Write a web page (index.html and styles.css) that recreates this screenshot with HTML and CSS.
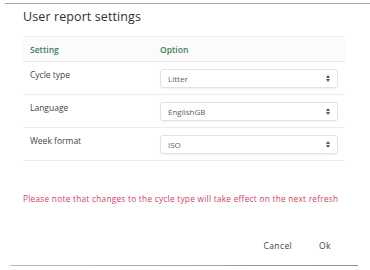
FILE: index.html
```html
<!DOCTYPE html>
<html lang="en">
<head>
    <meta charset="UTF-8">
    <title>User report settings</title>
    <link rel="stylesheet" href="styles.css">
</head>
<body>
    <div class="dialog">
        <h2 class="dialog-title">User report settings</h2>

        <table class="settings-table">
            <thead>
                <tr>
                    <th>Setting</th>
                    <th>Option</th>
                </tr>
            </thead>
            <tbody>
                <tr>
                    <td>Cycle type</td>
                    <td>
                        <div class="select-box"><span>Litter</span><span class="caret"></span></div>
                    </td>
                </tr>
                <tr>
                    <td>Language</td>
                    <td>
                        <div class="select-box"><span>EnglishGB</span><span class="caret"></span></div>
                    </td>
                </tr>
                <tr>
                    <td>Week format</td>
                    <td>
                        <div class="select-box"><span>ISO</span><span class="caret"></span></div>
                    </td>
                </tr>
            </tbody>
        </table>

        <p class="notice">Please note that changes to the cycle type will take effect on the next refresh</p>

        <div class="dialog-actions">
            <button class="action-btn">Cancel</button>
            <button class="action-btn">Ok</button>
        </div>
    </div>
</body>
</html>
```

FILE: styles.css
```css
* {
    margin: 0;
    padding: 0;
    box-sizing: border-box;
}

body {
    font-family: "Open Sans", "DejaVu Sans", sans-serif;
    background: #ffffff;
    color: #333333;
    width: 370px;
    height: 270px;
    overflow: hidden;
}

.dialog {
    margin-top: 3px;
    padding: 5px 25px 0 23px;
    height: 263px;
    position: relative;
}

.dialog::before {
    content: "";
    position: absolute;
    left: 5px;
    right: 0;
    top: 0;
    height: 1px;
    background: #a9a9a9;
}

.dialog::after {
    content: "";
    position: absolute;
    left: 10px;
    right: 12px;
    bottom: 0;
    height: 1px;
    background: linear-gradient(90deg, #b8c0c0, #8a8f90);
}

.dialog-title {
    font-size: 12.5px;
    font-weight: 400;
    letter-spacing: 0.1px;
    color: #303030;
    height: 28px;
    line-height: 18px;
}

.settings-table {
    width: 322px;
    border-collapse: collapse;
    font-size: 8.5px;
}

.settings-table th {
    text-align: left;
    font-weight: 600;
    color: #3f7c5e;
    background: #fbfbfb;
    height: 25px;
    padding: 0 7px;
    border-top: 1px solid #eeeeee;
    border-bottom: 1px solid #e6e6e6;
}

.settings-table td {
    height: 33px;
    padding: 0 7px;
    border-bottom: 1px solid #ececec;
    color: #444444;
    vertical-align: top;
    padding-top: 7px;
}

.settings-table td:first-child {
    width: 130px;
}

.settings-table td:last-child {
    padding: 7px 7px 0 7px;
}

.select-box {
    display: flex;
    align-items: center;
    justify-content: space-between;
    height: 19px;
    width: 178px;
    padding: 0 7px 0 7px;
    border: 1px solid #e2e2e2;
    border-radius: 3px;
    box-shadow: 0 1px 2px rgba(0, 0, 0, 0.06);
    font-size: 8px;
    color: #606060;
}

.caret {
    width: 4px;
    height: 7px;
    position: relative;
}

.caret::before,
.caret::after {
    content: "";
    position: absolute;
    left: 0;
    border-left: 2px solid transparent;
    border-right: 2px solid transparent;
}

.caret::before {
    top: 0;
    border-bottom: 3px solid #555555;
}

.caret::after {
    bottom: 0;
    border-top: 3px solid #555555;
}

.notice {
    margin-top: 32px;
    font-size: 8.2px;
    letter-spacing: 0.3px;
    color: #d23e5e;
}

.dialog-actions {
    display: flex;
    justify-content: flex-end;
    gap: 27px;
    margin-top: 36px;
    padding-right: 14px;
}

.action-btn {
    background: none;
    border: none;
    font-family: inherit;
    font-size: 8.5px;
    letter-spacing: 0.4px;
    color: #444444;
    cursor: pointer;
}
```
